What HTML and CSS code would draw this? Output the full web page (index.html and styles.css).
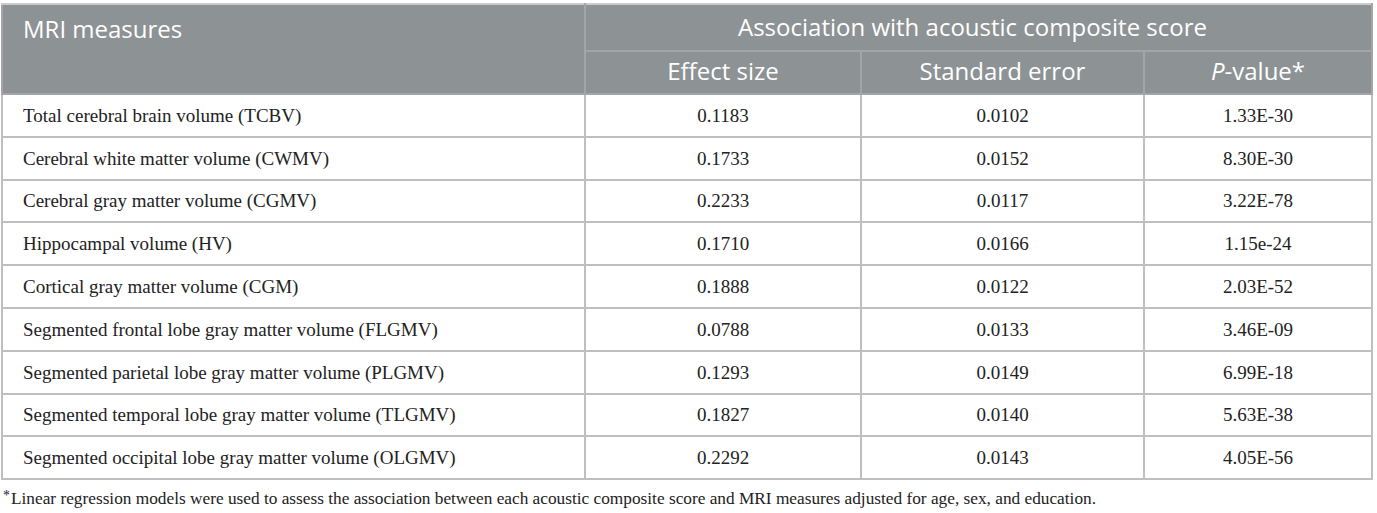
FILE: index.html
```html
<!DOCTYPE html>
<html lang="en">
<head>
<meta charset="utf-8">
<title>MRI measures table</title>
<link rel="stylesheet" href="styles.css">
</head>
<body>
<div class="wrap">
  <table class="data">
    <colgroup>
      <col class="c1"><col class="c2"><col class="c3"><col class="c4">
    </colgroup>
    <thead>
      <tr class="h1">
        <th rowspan="2" class="first">MRI measures</th>
        <th colspan="3" class="group">Association with acoustic composite score</th>
      </tr>
      <tr class="h2">
        <th>Effect size</th>
        <th>Standard error</th>
        <th><i>P</i>-value*</th>
      </tr>
    </thead>
    <tbody>
      <tr><td>Total cerebral brain volume (TCBV)</td><td>0.1183</td><td>0.0102</td><td>1.33E-30</td></tr>
      <tr><td>Cerebral white matter volume (CWMV)</td><td>0.1733</td><td>0.0152</td><td>8.30E-30</td></tr>
      <tr><td>Cerebral gray matter volume (CGMV)</td><td>0.2233</td><td>0.0117</td><td>3.22E-78</td></tr>
      <tr><td>Hippocampal volume (HV)</td><td>0.1710</td><td>0.0166</td><td>1.15e-24</td></tr>
      <tr><td>Cortical gray matter volume (CGM)</td><td>0.1888</td><td>0.0122</td><td>2.03E-52</td></tr>
      <tr><td>Segmented frontal lobe gray matter volume (FLGMV)</td><td>0.0788</td><td>0.0133</td><td>3.46E-09</td></tr>
      <tr><td>Segmented parietal lobe gray matter volume (PLGMV)</td><td>0.1293</td><td>0.0149</td><td>6.99E-18</td></tr>
      <tr><td>Segmented temporal lobe gray matter volume (TLGMV)</td><td>0.1827</td><td>0.0140</td><td>5.63E-38</td></tr>
      <tr><td>Segmented occipital lobe gray matter volume (OLGMV)</td><td>0.2292</td><td>0.0143</td><td>4.05E-56</td></tr>
    </tbody>
  </table>
  <p class="note"><span class="star">*</span>Linear regression models were used to assess the association between each acoustic composite score and MRI measures adjusted for age, sex, and education.</p>
</div>
</body>
</html>
```

FILE: styles.css
```css
html, body {
  margin: 0;
  padding: 0;
  background: #ffffff;
}

.wrap {
  padding: 3px 0 0 1px;
  width: 1370px;
}

.data {
  width: 1370px;
  border-collapse: collapse;
  table-layout: fixed;
  font-family: "Liberation Serif", "Times New Roman", serif;
  font-size: 19px;
  color: #222222;
}

.c1 { width: 583px; }
.c2 { width: 276px; }
.c3 { width: 283px; }
.c4 { width: 228px; }

.data th {
  background: #8d9294;
  color: #ffffff;
  font-family: "Open Sans", "Liberation Sans", sans-serif;
  font-weight: 400;
  font-size: 24px;
  text-align: center;
  border: 2px solid #a2a6a8;
  padding: 0;
  line-height: 1;
}

.data tr.h1 th {
  border-top: 2px solid #c9cccd;
  padding-bottom: 2px;
}

.data th.group {
  padding-right: 12px;
}

.data tr.h2 th {
  padding-bottom: 3px;
}

.data th.first {
  text-align: left;
  vertical-align: top;
  padding: 12px 0 0 20px;
}

.data tr.h1 { height: 47px; }
.data tr.h2 { height: 43px; }

.data td {
  border: 2px solid #bfbfbf;
  height: 40.8px;
  padding: 0;
  text-align: center;
  vertical-align: middle;
  line-height: 1;
}

.data td:first-child {
  text-align: left;
  padding-left: 20px;
}

.note {
  margin: 9px 0 0 2px;
  font-family: "Liberation Serif", "Times New Roman", serif;
  font-size: 17.3px;
  color: #222222;
}

.note .star {
  position: relative;
  top: -4px;
  font-size: 14px;
  margin-right: 1px;
}
```
